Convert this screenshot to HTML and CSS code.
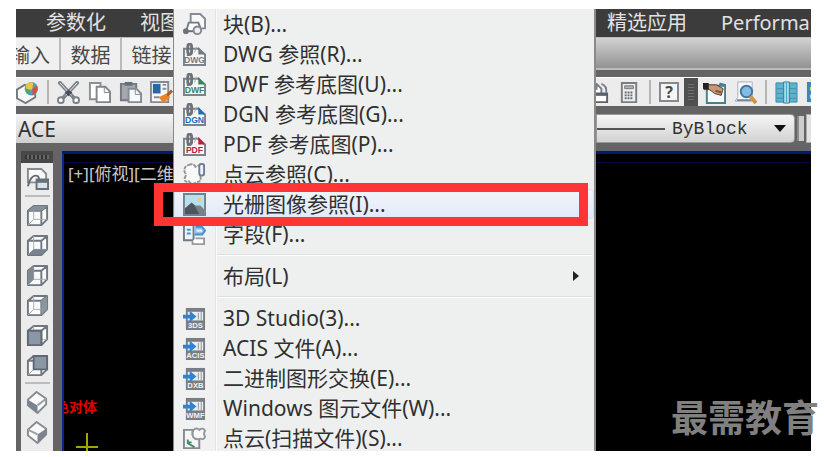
FILE: index.html
```html
<!DOCTYPE html>
<html lang="zh-CN">
<head>
  <meta charset="UTF-8">
  <meta name="viewport" content="width=device-width, initial-scale=1.0">
  <title>CAD 插入菜单</title>
  <link rel="stylesheet" href="styles.css">
</head>
<body>
  <svg class="defs" aria-hidden="true">
    <!-- cube: front face, top and right side, shared by the view buttons -->
    <symbol id="cube" viewBox="0 0 24 24">
      <path d="M2 7 8 2H22V16L16 22H2Z" fill="#fbfbfc"/>
      <path d="M2 7H16V22H2ZM2 7 8 2H22V16L16 22M16 7 22 2" fill="none" stroke="#707780" stroke-width="2" stroke-linejoin="round"/>
      <path d="M8 2V16H22M8 16 2 22" fill="none" stroke="#a9aeb5" stroke-width="1"/>
    </symbol>
    <symbol id="attach" viewBox="0 0 24 24">
      <path d="M1 6H16L23 12V23H1Z" fill="#f7f7f8" stroke="#7c828a" stroke-width="2"/>
      <path d="M5 11V4Q5 1 7 1T9 4V9Q9 12 6 12H4" fill="none" stroke="#6d7379" stroke-width="3"/>
      <path d="M12 10 14 4" stroke="#a5aab0" stroke-width="1"/>
      <path d="M16 4V12H23Z" fill="currentColor"/>
    </symbol>
    <symbol id="import" viewBox="0 0 24 24">
      <path d="M3 1H23V24H3Z" fill="#777e85"/>
      <path d="M5 5H21V14H5Z" fill="#eceef0"/>
      <path d="M16 6V13M19 5V14" stroke="#8b9198" stroke-width="1"/>
      <path d="M0 8H7V4L14 10 7 16V12H0Z" fill="#2f83d3"/>
    </symbol>
  </svg>

  <main class="app">
    <nav class="row menubar">
      <div class="part">
        <a href="#">参数化</a>
        <a href="#">视图</a>
      </div>
      <div class="part right">
        <a href="#">精选应用</a>
        <a href="#">Performance</a>
      </div>
    </nav>

    <div class="row tabs">
      <div class="part">
        <button class="tab first">输入</button>
        <button class="tab">数据</button>
        <button class="tab last">链接</button>
      </div>
      <div class="part right"></div>
    </div>

    <div class="row toolbar">
      <div class="part">
        <button aria-label="3D 发布">
          <svg viewBox="0 0 24 24"><path d="M1 9 9 4 20 9V17L10 23 1 18Z" fill="#f8f8f8" stroke="#737980" stroke-width="2"/><circle cx="16" cy="8" r="7" fill="#4b9fd0"/><path d="M10 5Q13 0 18 2L17 8 12 12Z" fill="#e9c544"/><path d="M17 8 22 5Q24 12 17 15Z" fill="#d8513c"/><path d="M10 8 15 9 14 14Q10 13 10 8Z" fill="#4fa66a"/></svg>
        </button>
        <span class="divider"></span>
        <button aria-label="剪切">
          <svg viewBox="0 0 24 24"><path d="M3 2 18 18M21 2 6 18" stroke="#7b828a" stroke-width="4" stroke-linecap="round"/><path d="M3 2 15 15M21 2 9 15" stroke="#eef0f2" stroke-width="1"/><path d="M8 12 12 9 16 12 12 16Z" fill="#4a5058"/><circle cx="4" cy="20" r="3" fill="#fff" stroke="#7b8188" stroke-width="2"/><circle cx="20" cy="20" r="3" fill="#fff" stroke="#7b8188" stroke-width="2"/></svg>
        </button>
        <button aria-label="复制">
          <svg viewBox="0 0 24 24"><path d="M2 2H13V19H2Z" fill="#fff" stroke="#8a8f95" stroke-width="2"/><path d="M9 6H18L23 11V22H9Z" fill="#fff" stroke="#81878d" stroke-width="2"/><path d="M17 6V12H23" fill="none" stroke="#81878d" stroke-width="1"/></svg>
        </button>
        <button aria-label="粘贴">
          <svg viewBox="0 0 24 24"><path d="M2 3H18V20H2Z" fill="#a4a8ae" stroke="#737980" stroke-width="2"/><path d="M6 1H14V5H6Z" fill="#686e75"/><path d="M10 8H18L23 13V22H10Z" fill="#f7f8f9" stroke="#858b92" stroke-width="2"/><path d="M17 8V14H23" fill="none" stroke="#858b92"/></svg>
        </button>
        <button aria-label="特性匹配">
          <svg viewBox="0 0 24 24"><path d="M1 1H19V22H1Z" fill="#f8f8f8" stroke="#858b92" stroke-width="2"/><path d="M3 3H11V13H3Z" fill="#2c67a5"/><path d="M13 4H17M13 8H17M4 17H10" stroke="#8a9098" stroke-width="2"/><path d="M9 17 17 13 21 17 14 23Z" fill="#e98526"/><path d="M18 15 23 10" stroke="#b35e1f" stroke-width="3"/></svg>
        </button>
      </div>
      <div class="part right">
        <button aria-label="图纸集" class="cut">
          <svg viewBox="0 0 24 24"><path d="M2 3H10L15 8V14H4M10 3V9" fill="#fff" stroke="#787e85" stroke-width="2"/><path d="M15 3Q21 5 20 12" fill="none" stroke="#787e85" stroke-width="2"/><path d="M5 13H21V22H5Z" fill="#fff" stroke="#59636e" stroke-width="2"/><path d="M5 14H21" stroke="#59636e" stroke-width="3"/></svg>
        </button>
        <button aria-label="计算器">
          <svg viewBox="0 0 24 24"><path d="M4 2H19V22H4Z" fill="#eee" stroke="#787e84" stroke-width="2"/><path d="M7 5H16V8H7Z" fill="#aeb3b8" stroke="#777"/><path d="M7 12H16M7 15H16M7 18H16" stroke="#656b72" stroke-width="2" stroke-dasharray="2 1"/></svg>
        </button>
        <span class="divider"></span>
        <button aria-label="帮助" class="help"><span>?</span></button>
        <span class="grip"></span>
        <button aria-label="标注">
          <svg viewBox="0 0 24 24"><path d="M4 5H23V23H4Z" fill="#f6fafb" stroke="#4a7f91" stroke-width="2"/><path d="M17 3 24 5" stroke="#4a7f91" stroke-width="3"/><path d="M0 3 6 4 14 4 21 8 19 15 12 13 7 9 1 9Z" fill="#c89876" stroke="#513a2d" stroke-width="1"/><path d="M0 2H6V9L0 8Z" fill="#222"/><path d="M13 10 19 12" stroke="#80543a" stroke-width="2"/></svg>
        </button>
        <button aria-label="查找">
          <svg viewBox="0 0 24 24"><path d="M4 1H19V21H1L4 17Z" fill="#f8f9fc" stroke="#a3adc3" stroke-width="1"/><path d="M3 20H18" stroke="#7b8496" stroke-width="2"/><circle cx="13" cy="11" r="6" fill="#80bce5" stroke="#47749a" stroke-width="2"/><path d="M17 16 23 23" stroke="#d49445" stroke-width="4"/></svg>
        </button>
        <span class="divider"></span>
        <button aria-label="表格">
          <svg viewBox="0 0 24 24"><path d="M1 2H23V22H1Z" fill="#62b1cb" stroke="#318daf"/><path d="M2 8H22M2 13H22M2 18H22" stroke="#3c91b0"/><path d="M9 1H15V23H9Z" fill="#a4dbe8" stroke="#287f9f"/><path d="M12 2V22" stroke="#45a6c4"/></svg>
        </button>
        <button aria-label="图层">
          <svg viewBox="0 0 24 24"><path d="M1 1H23V22H1Z" fill="#3b86b7"/><path d="M4 6H20V10H4Z" fill="#c4dc7c"/><path d="M4 14H20V18H4Z" fill="#abd6ed"/></svg>
        </button>
      </div>
    </div>

    <div class="row props">
      <div class="part">
        <select class="space" aria-label="工作空间"><option>ACE</option></select>
      </div>
      <div class="part right">
        <label class="combo">
          <span class="line"></span>
          <select aria-label="线型"><option>ByBlock</option></select>
          <svg class="caret" viewBox="0 0 12 7"><path d="M0 0H12L6 7Z" fill="#111"/></svg>
        </label>
        <span class="bar"></span>
        <span class="next"><span class="line"></span></span>
      </div>
    </div>

    <div class="work">
      <aside class="palette">
        <div class="grip"></div>
        <button aria-label="命名视图">
          <svg viewBox="0 0 24 24"><path d="M2 2H16L21 7V16H2Z" fill="#f9f9f9" stroke="#858b91" stroke-width="2"/><path d="M2 20Q5 9 10 9T13 16" fill="none" stroke="#5f676f" stroke-width="2"/><path d="M11 13H23V23H11Z" fill="#dde2e8" stroke="#66707c" stroke-width="2"/><path d="M11 15H23" stroke="#66707c" stroke-width="3"/></svg>
        </button>
        <hr>
        <button aria-label="俯视"><svg viewBox="0 0 24 24"><use href="#cube"/><path d="M2 7 8 2H22L16 7Z" fill="#87909a"/></svg></button>
        <button aria-label="仰视"><svg viewBox="0 0 24 24"><use href="#cube"/><path d="M2 22 8 16H22L16 22Z" fill="#78828e"/></svg></button>
        <button aria-label="左视"><svg viewBox="0 0 24 24"><use href="#cube"/><path d="M2 7 8 2V16L2 22Z" fill="#7f8994"/></svg></button>
        <button aria-label="右视"><svg viewBox="0 0 24 24"><use href="#cube"/><path d="M16 7 22 2V16L16 22Z" fill="#8b95a0"/></svg></button>
        <button aria-label="前视"><svg viewBox="0 0 24 24"><use href="#cube"/><path d="M2 7H16V22H2Z" fill="#8b97a4" stroke="#606873" stroke-width="2"/></svg></button>
        <button aria-label="后视"><svg viewBox="0 0 24 24"><use href="#cube"/><path d="M8 2H22V16H8Z" fill="#8b97a4" stroke="#606873" stroke-width="2"/></svg></button>
        <hr>
        <button aria-label="西南等轴测"><svg viewBox="0 0 24 24"><path d="M11 1 21 8V14L12 23 2 15V9Z" fill="#fafafa" stroke="#858b92" stroke-width="2"/><path d="M2 9 12 15V23L2 15Z" fill="#7b838d"/><path d="M12 15 21 8" stroke="#9ba0a6" stroke-width="2"/></svg></button>
        <button aria-label="东南等轴测"><svg viewBox="0 0 24 24"><path d="M11 1 21 8V14L12 23 2 15V9Z" fill="#fafafa" stroke="#858b92" stroke-width="2"/><path d="M21 8 12 14V23L21 15Z" fill="#7b838d"/><path d="M12 14 2 9" stroke="#9ba0a6" stroke-width="2"/></svg></button>
      </aside>
      <section class="canvas">
        <span class="view-label">[+][俯视][二维线框]</span>
        <span class="cad-text">色对体</span>
        <svg class="cross" viewBox="0 0 22 26"><path d="M11 0V26M0 14H22" stroke="#a5a500" stroke-width="2"/></svg>
      </section>
    </div>

    <div class="menu" role="menu">
      <button role="menuitem">
        <svg viewBox="0 0 24 24"><path d="M8 10V1H18L23 6V16H16" fill="#f8f8f8" stroke="#858b92" stroke-width="2"/><path d="M3 20 6 10H16L18 15" fill="#fff" stroke="#737980" stroke-width="2"/><path d="M1 19H13" stroke="#646b73" stroke-width="2"/><circle cx="3" cy="19" r="3" fill="#6c737b"/><circle cx="15" cy="18" r="4" fill="#eceef0" stroke="#81888f" stroke-width="2"/></svg>
        块(B)...
      </button>
      <button role="menuitem">
        <svg class="dwg" viewBox="0 0 24 24"><use href="#attach"/><text x="12" y="21">DWG</text></svg>
        DWG 参照(R)...
      </button>
      <button role="menuitem">
        <svg class="dwf" viewBox="0 0 24 24"><use href="#attach"/><text x="12" y="21">DWF</text></svg>
        DWF 参考底图(U)...
      </button>
      <button role="menuitem">
        <svg class="dgn" viewBox="0 0 24 24"><use href="#attach"/><text x="12" y="21">DGN</text></svg>
        DGN 参考底图(G)...
      </button>
      <button role="menuitem">
        <svg class="pdf" viewBox="0 0 24 24"><use href="#attach"/><text x="12" y="21">PDF</text></svg>
        PDF 参考底图(P)...
      </button>
      <button role="menuitem">
        <svg viewBox="0 0 24 24"><path d="M6 2Q11 0 13 4 18 1 20 6 23 10 18 13 20 20 14 20 9 24 6 19 1 21 2 15 4 12 2 10 0 4 6 2Z" fill="#f9f9f9" stroke="#90959b" stroke-width="2" stroke-dasharray="4 1"/><rect x="17" y="1" width="5" height="12" rx="2" fill="#f0f2f7" stroke="#707c98" stroke-width="2"/></svg>
        点云参照(C)...
      </button>
      <button role="menuitem" class="active">
        <svg viewBox="0 0 24 24"><path d="M1 1H23V23H1Z" fill="#b8dff0" stroke="#758087" stroke-width="2"/><circle cx="17" cy="7" r="2" fill="#f0ce66"/><path d="M2 16 9 10 22 21V22H2Z" fill="#4d565f"/><path d="M12 13 18 13 22 17V22H17Z" fill="#77818a"/></svg>
        光栅图像参照(I)...
      </button>
      <button role="menuitem">
        <svg viewBox="0 0 24 24"><path d="M1 2H11V18H1Z" fill="#eef4fa" stroke="#727c88" stroke-width="2"/><path d="M4 7H8M4 11H8" stroke="#4a90cf" stroke-width="2"/><path d="M13 4H20L23 8 20 12H12" fill="#8dc3ef" stroke="#4a90cf" stroke-width="2"/><path d="M14 8H20" stroke="#eff7ff" stroke-width="2"/><path d="M10 19V22H22V16H13" fill="#fff" stroke="#969ba1" stroke-width="2"/></svg>
        字段(F)...
      </button>
      <hr>
      <button role="menuitem" class="plain">
        布局(L)
        <svg class="arrow" viewBox="0 0 6 10"><path d="M0 0 6 5 0 10Z" fill="#222"/></svg>
      </button>
      <hr>
      <button role="menuitem">
        <svg class="imp" viewBox="0 0 24 24"><use href="#import"/><text x="13" y="22">3DS</text></svg>
        3D Studio(3)...
      </button>
      <button role="menuitem">
        <svg class="imp" viewBox="0 0 24 24"><use href="#import"/><text x="13" y="22">ACIS</text></svg>
        ACIS 文件(A)...
      </button>
      <button role="menuitem">
        <svg class="imp" viewBox="0 0 24 24"><use href="#import"/><text x="13" y="22">DXB</text></svg>
        二进制图形交换(E)...
      </button>
      <button role="menuitem">
        <svg class="imp" viewBox="0 0 24 24"><use href="#import"/><text x="13" y="22">WMF</text></svg>
        Windows 图元文件(W)...
      </button>
      <button role="menuitem">
        <svg viewBox="0 0 24 24"><path d="M1 3H10V8H17V22H1Z" fill="#f5f5f5" stroke="#858b91" stroke-width="2"/><path d="M11 3Q14 0 17 3 21 0 23 4 21 7 23 10 22 14 18 12 14 14 11 11 9 7 11 3Z" fill="#f8f8f8" stroke="#90969b" stroke-width="2"/><path d="M5 13V17L12 21M4 16H9" fill="none" stroke="#478766" stroke-width="2"/></svg>
        点云(扫描文件)(S)...
      </button>
    </div>
  </main>

  <div class="highlight"></div>
  <div class="watermark">最需教育</div>
</body>
</html>
```
FILE: styles.css
```css
* {
  box-sizing: border-box;
}
body {
  margin: 0;
  padding: 9px 13px 6px 16px;
  height: 100vh;
  overflow: hidden;
  position: relative;
  background: #fff;
  font-family: "Noto Sans", "Noto Sans CJK SC", sans-serif;
  font-size: 20px;
}
button, select {
  font: inherit;
  color: inherit;
  border: none;
  background: none;
  padding: 0;
  margin: 0;
}
svg {
  display: block;
  flex: none;
}
.defs {
  position: absolute;
  width: 0;
  height: 0;
}
.app {
  position: relative;
  display: flex;
  flex-direction: column;
  height: 100%;
  overflow: hidden;
  background: #646464;
}

/* rows above the drawing area, split around the open menu */
.row {
  display: grid;
  grid-template-columns: 157px 1fr;
  column-gap: 423px;
  flex: none;
}
.part {
  display: flex;
  align-items: center;
  min-width: 0;
  overflow: hidden;
  white-space: nowrap;
}
.menubar {
  height: 28px;
  background: #3c3c3c;
}
.menubar a {
  color: #e2e2e2;
  text-decoration: none;
  line-height: 28px;
}
.menubar .part {
  gap: 34px;
  padding-left: 30px;
}
.menubar .right {
  padding-left: 11px;
}

.tabs {
  height: 33px;
  margin-bottom: 7px;
  background: #eee;
  border-top: 1px solid #bbb;
}
.tabs .part {
  align-items: stretch;
}
.tabs .right {
  background: linear-gradient(#d2d2d2, #929292);
  border-bottom: 2px solid #bbb;
}
.tab {
  display: flex;
  align-items: center;
  justify-content: center;
  flex: none;
  width: 61px;
  color: #484848;
  border-right: 2px solid #bbb;
  background: #f0f0f0;
}
.tab.first {
  width: 45px;
  overflow: hidden;
  justify-content: flex-end;
  padding-right: 9px;
}

.toolbar {
  height: 29px;
  margin-bottom: 8px;
}
.toolbar .part {
  background: #ececec;
  gap: 8px;
  border-top: 1px solid #fff;
}
.toolbar button {
  flex: none;
}
.toolbar svg {
  width: 23px;
  height: 23px;
}
.toolbar .cut {
  margin-left: -9px;
}
.divider {
  flex: none;
  width: 2px;
  height: 24px;
  background: #b5b5b5;
}
.toolbar .help {
  display: grid;
  place-items: center;
  width: 20px;
  height: 20px;
  border: 2px solid #858a90;
  background: #f5f5f5;
  color: #454b52;
  font-size: 16px;
  font-weight: bold;
  line-height: 16px;
}
.toolbar .grip {
  flex: none;
  align-self: stretch;
  width: 14px;
  margin: 0 -3px;
  background: repeating-linear-gradient(#4e4e4e 0 2px, #707070 2px 3px);
  border: 4px solid #505050;
}

.props {
  height: 29px;
  margin-bottom: 8px;
}
.props select {
  appearance: none;
}
.space {
  width: 100%;
  height: 29px;
  padding-left: 2px;
  background: linear-gradient(#f5f5f5, #cfcfcf);
  color: #333;
  font-size: 21px;
}
.combo {
  display: flex;
  align-items: center;
  gap: 7px;
  flex: none;
  width: 199px;
  height: 29px;
  padding-right: 8px;
  border: 1px solid #999;
  border-radius: 0 4px 4px 0;
  background: linear-gradient(#f5f5f5, #d2d2d2);
}
.combo .line {
  width: 68px;
  height: 2px;
  background: #555;
}
.combo select {
  flex: 1;
  min-width: 0;
  color: #333;
  font-family: "Liberation Mono", monospace;
  font-size: 18px;
}
.caret {
  width: 12px;
  height: 7px;
}
.bar {
  flex: none;
  width: 7px;
  height: 25px;
  margin: 0 2px;
  background: #ccc;
  border-left: 2px solid #8a8a8a;
}
.next {
  display: flex;
  align-items: center;
  flex: 1;
  height: 29px;
  padding-left: 4px;
  background: #e2e2e2;
  border: 1px solid #aaa;
}
.next .line {
  width: 100%;
  height: 2px;
  background: #555;
}

.work {
  display: flex;
  flex: 1;
  min-height: 0;
}
.palette {
  display: flex;
  flex-direction: column;
  align-items: center;
  flex: none;
  width: 32px;
  margin: 0 9px 0 5px;
  background: #ececec;
  overflow: hidden;
}
.palette .grip {
  flex: none;
  width: 100%;
  height: 12px;
  border: 4px solid #484848;
  background: repeating-linear-gradient(90deg, #333 0 2px, #666 2px 4px);
}
.palette button {
  display: grid;
  place-items: center;
  flex: none;
  height: 30px;
}
.palette svg {
  width: 23px;
  height: 23px;
}
.palette hr {
  flex: none;
  width: 25px;
  height: 2px;
  margin: 2px 0 3px;
  border: none;
  background: #bbb;
}
.canvas {
  position: relative;
  flex: 1;
  background: #000;
  border-left: 2px solid #0a2490;
  border-top: 3px solid #061870;
  overflow: hidden;
}
.canvas::before {
  content: "";
  display: block;
  height: 8px;
  border-bottom: 1px solid #000c4a;
}
.view-label {
  position: absolute;
  left: 4px;
  top: 8px;
  color: #c8c8c8;
  font-size: 17px;
  line-height: 24px;
  white-space: nowrap;
}
.cad-text {
  position: absolute;
  left: -9px;
  top: 243px;
  color: #e00000;
  font-size: 14px;
  font-weight: bold;
  line-height: 20px;
}
.cross {
  position: absolute;
  left: 12px;
  top: 279px;
  width: 22px;
  height: 26px;
}

.menu {
  position: absolute;
  left: 157px;
  top: 0;
  width: 423px;
  height: 100%;
  overflow: hidden;
  color: #303030;
  font-size: 21px;
  background: linear-gradient(90deg, #f1f1f1 41px, #e3e4e4 41px 42px, #fafafa 42px 43px, #eef0f0 43px);
  border-left: 1px solid #888;
  border-right: 2px solid #8a8a8a;
}
.menu button {
  display: flex;
  align-items: center;
  gap: 17px;
  width: 100%;
  height: 30px;
  padding-left: 9px;
  line-height: 30px;
  text-align: left;
  white-space: nowrap;
}
.menu button svg {
  width: 23px;
  height: 23px;
}
.menu .plain {
  justify-content: space-between;
  padding: 0 15px 0 49px;
}
.menu button .arrow {
  width: 6px;
  height: 10px;
}
.menu .active {
  background: linear-gradient(#f1f4f9, #e2eaf8);
  border: 1px solid #cde6f2;
  border-radius: 4px;
  padding-left: 8px;
}
.menu hr {
  height: 2px;
  margin: 5px 2px 5px 43px;
  border: none;
  border-top: 1px solid #e0e0e0;
  background: #fff;
}
.menu text {
  font-family: "Liberation Sans", sans-serif;
  font-size: 9px;
  font-weight: bold;
  text-anchor: middle;
  fill: currentColor;
}
.dwg {
  color: #747a81;
}
.dwf {
  color: #35845c;
}
.dgn {
  color: #176fc1;
}
.pdf {
  color: #b91f35;
}
.imp {
  color: #f2f2f2;
}
.menu .imp text {
  font-size: 8px;
}

.highlight {
  position: absolute;
  left: 154px;
  top: 183px;
  width: 434px;
  height: 43px;
  border: 9px solid #ff3535;
}
.watermark {
  position: absolute;
  left: 671px;
  top: 391px;
  color: #808080;
  font-family: "Noto Sans CJK SC", sans-serif;
  font-size: 37px;
  font-weight: bold;
  line-height: 50px;
  white-space: nowrap;
}
```
